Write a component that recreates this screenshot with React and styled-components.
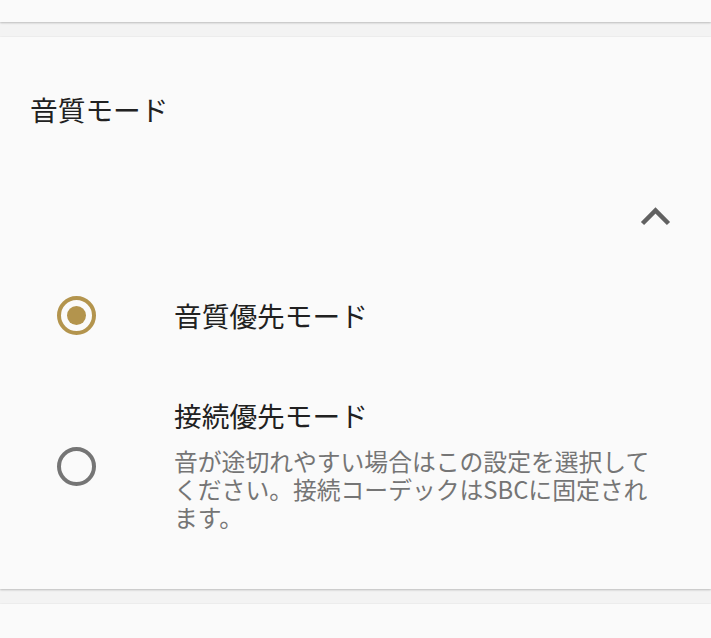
// 音質モード設定画面
import React from 'react'
import styled, { createGlobalStyle } from 'styled-components'

const GlobalStyle = createGlobalStyle`
  html, body {
    margin: 0;
    padding: 0;
    background: #f3f3f3;
  }
  body {
    font-family: "Noto Sans CJK JP", "Noto Sans", Roboto, sans-serif;
    -webkit-font-smoothing: antialiased;
  }
`

const Page = styled.div`
  width: 711px;
  height: 638px;
  overflow: hidden;
  display: flex;
  flex-direction: column;
  gap: 15px;
`

const Card = styled.div`
  background: #fafafa;
  box-shadow: 0 1px 2px rgba(0, 0, 0, 0.22), 0 0 1px rgba(0, 0, 0, 0.08);
  flex-shrink: 0;
  height: ${p => p.$height}px;
`

const MainCard = styled(Card)`
  display: flex;
  flex-direction: column;
  padding: 58px 0 25px;
  box-sizing: border-box;
`

const Title = styled.h2`
  margin: 0 0 0 30px;
  font-size: 27.7px;
  line-height: 28px;
  font-weight: 400;
  color: #212121;
`

const ExpandRow = styled.div`
  display: flex;
  justify-content: flex-end;
  padding: 84px 40px 0 0;
  height: 19px;
`

const Options = styled.div`
  display: flex;
  flex-direction: column;
  margin-top: 41px;
`

const Option = styled.label`
  display: grid;
  grid-template-columns: 174px 1fr;
  align-items: center;
  min-height: ${p => p.$minHeight}px;
  padding: ${p => p.$pad};
  box-sizing: border-box;
  cursor: pointer;
`

const RadioCell = styled.div`
  display: flex;
  padding-left: 57px;
`

const Radio = styled.span`
  width: 39px;
  height: 39px;
  box-sizing: border-box;
  border-radius: 50%;
  border: 4px solid ${p => (p.$checked ? '#b3944d' : '#757575')};
  display: flex;
  align-items: center;
  justify-content: center;

  &::after {
    content: '';
    width: 19px;
    height: 19px;
    border-radius: 50%;
    background: #b3944d;
    display: ${p => (p.$checked ? 'block' : 'none')};
  }
`

const TextCell = styled.div`
  display: flex;
  flex-direction: column;
  padding-right: 50px;
`

const OptionTitle = styled.div`
  font-size: 27.7px;
  line-height: 28px;
  color: #212121;
`

const OptionSummary = styled.div`
  margin-top: 18px;
  font-size: 23.8px;
  line-height: 28px;
  color: #757575;
`

const Chevron = () => (
  <svg width="31" height="19" viewBox="0 0 31 19">
    <path d="M2.5 16.5 L15.5 3.5 L28.5 16.5" fill="none" stroke="#616161" strokeWidth="4.5" />
  </svg>
)

const options = [
  { id: 'quality', title: '音質優先モード', checked: true, minHeight: 96, pad: '0' },
  {
    id: 'connection',
    title: '接続優先モード',
    summary: '音が途切れやすい場合はこの設定を選択してください。接続コーデックはSBCに固定されます。',
    checked: false,
    minHeight: 200,
    pad: '38px 0 32px',
  },
]

function App() {
  return (
    <>
      <GlobalStyle />
      <Page>
        <Card $height={22} />
        <MainCard $height={552}>
          <Title>音質モード</Title>
          <ExpandRow>
            <Chevron />
          </ExpandRow>
          <Options>
            {options.map(o => (
              <Option key={o.id} $minHeight={o.minHeight} $pad={o.pad}>
                <RadioCell>
                  <Radio $checked={o.checked} />
                </RadioCell>
                <TextCell>
                  <OptionTitle>{o.title}</OptionTitle>
                  {o.summary && <OptionSummary>{o.summary}</OptionSummary>}
                </TextCell>
              </Option>
            ))}
          </Options>
        </MainCard>
        <Card $height={40} />
      </Page>
    </>
  )
}

export default App
